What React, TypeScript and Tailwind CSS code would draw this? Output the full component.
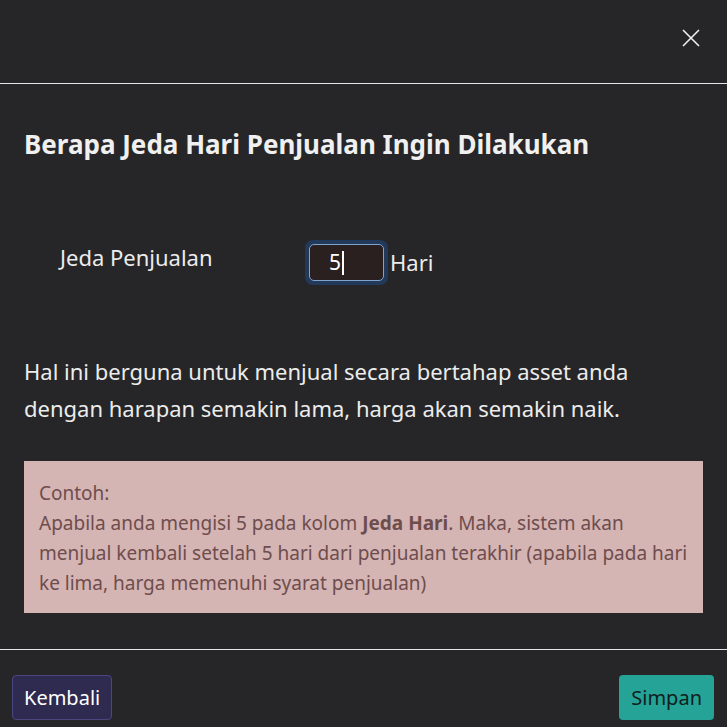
import React from "react";

export default function App() {
  return (
    <div
      className="w-[727px] h-[727px] bg-[#262628] text-[#ececec] flex flex-col overflow-hidden"
      style={{ fontFamily: '"Noto Sans", "Open Sans", sans-serif' }}
    >
      <div className="h-[84px] flex items-center justify-end pr-[27px] border-b border-[#e6e6e6] shrink-0">
        <svg width="18" height="18" viewBox="0 0 18 18" className="mt-[-8px]">
          <path d="M1 1 L17 17 M17 1 L1 17" stroke="#f0f0f0" strokeWidth="1.6" />
        </svg>
      </div>
      <div className="flex-1 px-[24px] pt-[42px]">
        <h1 className="text-[26px] font-bold leading-[36px] text-[#f0f0f0]">
          Berapa Jeda Hari Penjualan Ingin Dilakukan
        </h1>
        <div className="flex items-center mt-[77px] h-[47px]">
          <div className="w-[281px] pl-[36px] text-[22px] mt-[-10px]">Jeda Penjualan</div>
          <div className="rounded-[8px] bg-[#22395a] p-[4px]">
            <div className="w-[75px] h-[37px] rounded-[5px] border border-[#7ea3cf] bg-[#2b2020] flex items-center pl-[19px] text-[21px] text-white">
              5<span className="inline-block w-[1.5px] h-[24px] bg-white ml-[1px]" />
            </div>
          </div>
          <div className="text-[22px] ml-[2px]">Hari</div>
        </div>
        <p className="mt-[67px] text-[22px] leading-[37px]">
          Hal ini berguna untuk menjual secara bertahap asset anda dengan harapan semakin lama, harga akan semakin naik.
        </p>
        <div className="mt-[34px] bg-[#d5b4b4] text-[#6e4d4d] px-[15px] pt-[17px] pb-[15px] text-[19px] leading-[30px]">
          <div>Contoh:</div>
          <div>
            Apabila anda mengisi 5 pada kolom <b>Jeda Hari</b>. Maka, sistem akan menjual kembali setelah 5 hari dari penjualan terakhir (apabila pada hari ke lima, harga memenuhi syarat penjualan)
          </div>
        </div>
      </div>
      <div className="h-[78px] border-t border-[#e6e6e6] flex items-center justify-between px-[12px] pt-[18px] shrink-0">
        <button className="h-[45px] px-[11px] rounded-[4px] bg-[#2e2a50] border border-[#4b4680] text-[20px] text-white">
          Kembali
        </button>
        <button className="h-[45px] px-[12px] mr-[1px] rounded-[4px] bg-[#24a396] text-[20px] text-[#10201e]">
          Simpan
        </button>
      </div>
    </div>
  );
}
